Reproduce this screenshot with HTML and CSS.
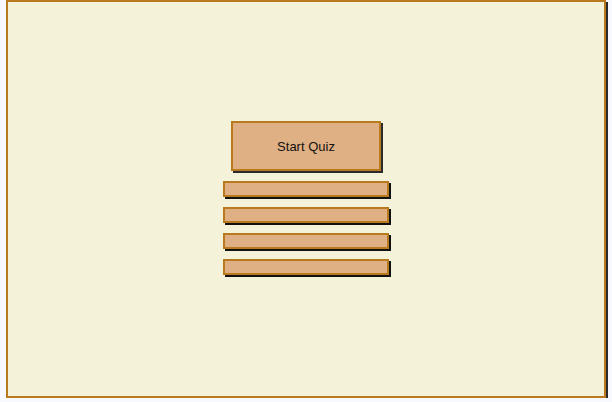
FILE: index.html
```html
<!DOCTYPE html>
<html>
<head>
<meta charset="utf-8">
<link rel="stylesheet" href="styles.css">
</head>
<body>
<div class="frame">
  <button class="start">Start Quiz</button>
  <div class="options">
    <div class="bar"></div>
    <div class="bar"></div>
    <div class="bar"></div>
    <div class="bar"></div>
  </div>
</div>
</body>
</html>
```
FILE: styles.css
```css
html, body {
  margin: 0;
  padding: 0;
  background: #f8f8ff;
}
body {
  padding-left: 6px;
  font-family: "Liberation Sans", Arial, sans-serif;
}
.frame {
  box-sizing: border-box;
  width: 600px;
  height: 398px;
  border: 2px solid #b8791f;
  background: #f4f2d8;
  box-shadow: 2px 2px 0 #2b2b2b;
  display: flex;
  flex-direction: column;
  align-items: center;
  padding-top: 119px;
}
.start {
  box-sizing: border-box;
  width: 150px;
  height: 50px;
  border: 2px solid #b8791f;
  background: #dfb083;
  box-shadow: 2px 2px 0 #2b2b2b;
  font-family: "Liberation Sans", Arial, sans-serif;
  font-size: 13px;
  color: #111;
  padding: 0;
  margin: 0 0 10px 0;
}
.options {
  display: flex;
  flex-direction: column;
  gap: 10px;
}
.bar {
  box-sizing: border-box;
  width: 166px;
  height: 16px;
  border: 2px solid #b8791f;
  background: #dfb083;
  box-shadow: 2px 2px 0 #111;
}
```
